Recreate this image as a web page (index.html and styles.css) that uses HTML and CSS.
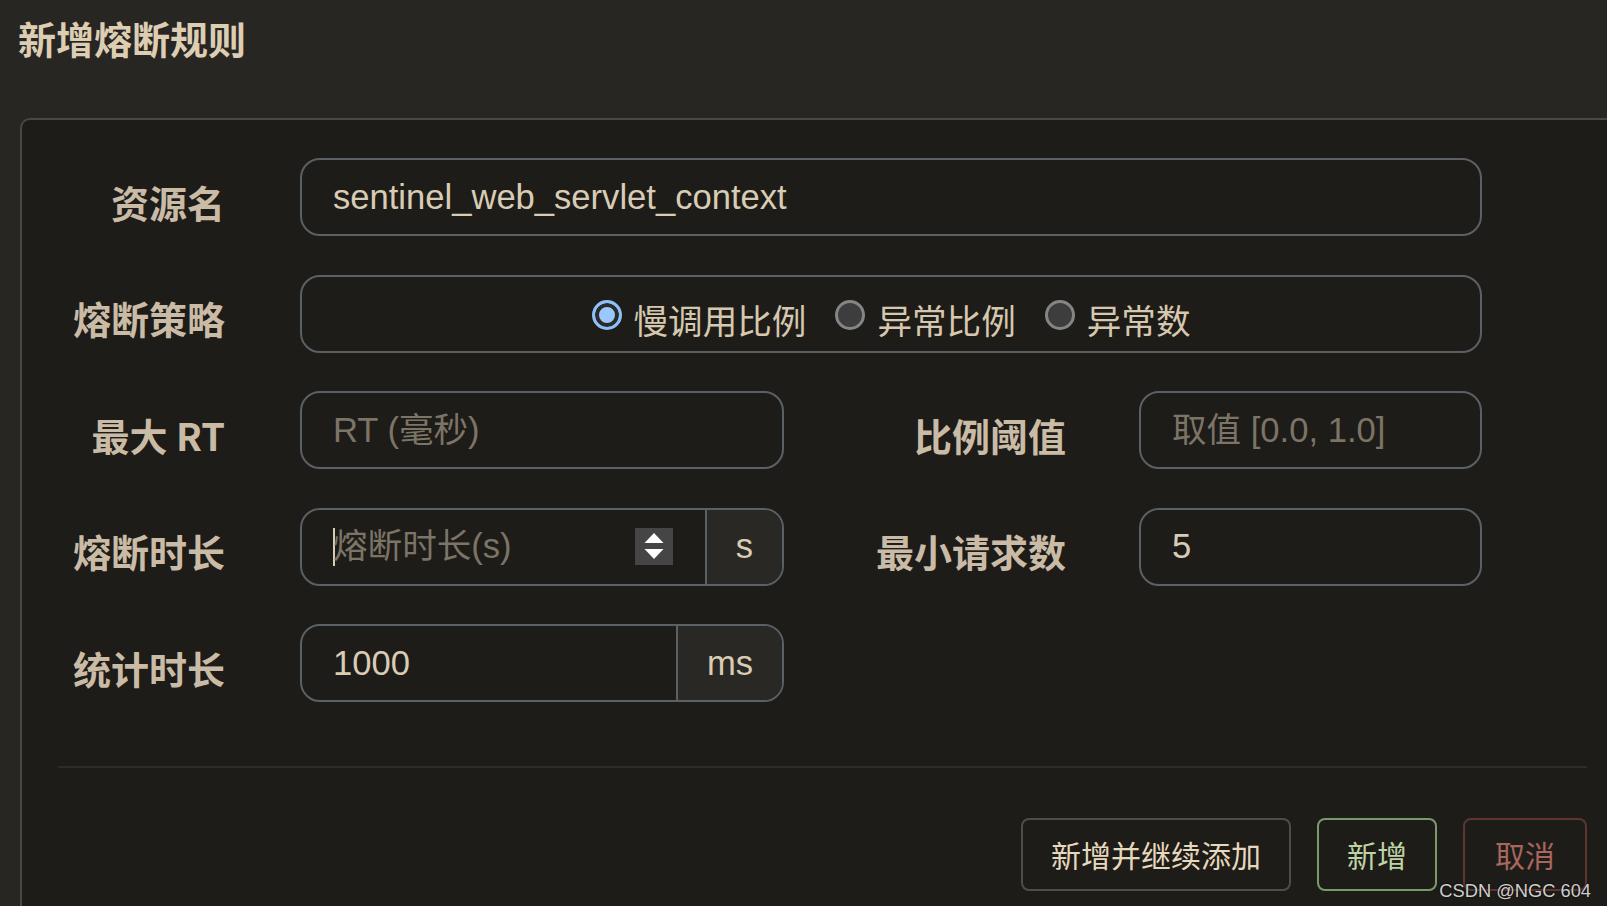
FILE: index.html
```html
<!DOCTYPE html>
<html lang="zh-CN">
<head>
    <meta charset="UTF-8">
    <meta name="viewport" content="width=device-width, initial-scale=1.0">
    <title>新增熔断规则</title>
    <link rel="stylesheet" href="styles.css">
</head>
<body>
    <div class="modal-header">
        <h1>新增熔断规则</h1>
    </div>

    <div class="modal-body">
        <form class="rule-form">
            <div class="row">
                <label class="label">资源名</label>
                <input class="field full" type="text" value="sentinel_web_servlet_context">
            </div>

            <div class="row">
                <label class="label">熔断策略</label>
                <div class="field full radio-group">
                    <span class="radio-item"><span class="radio checked"></span>慢调用比例</span>
                    <span class="radio-item"><span class="radio"></span>异常比例</span>
                    <span class="radio-item"><span class="radio"></span>异常数</span>
                </div>
            </div>

            <div class="row">
                <label class="label">最大 RT</label>
                <input class="field half" type="text" placeholder="RT (毫秒)">
                <label class="label side">比例阈值</label>
                <input class="field small" type="text" placeholder="取值 [0.0, 1.0]">
            </div>

            <div class="row">
                <label class="label">熔断时长</label>
                <div class="field half group">
                    <div class="group-input">
                        <span class="caret"></span>
                        <input type="text" placeholder="熔断时长(s)">
                        <span class="spinner">
                            <svg width="38" height="37" viewBox="0 0 38 37">
                                <path d="M19 5 L28.5 15 L9.5 15 Z" fill="#fff"/>
                                <path d="M9.5 21 L28.5 21 L19 31 Z" fill="#fff"/>
                            </svg>
                        </span>
                    </div>
                    <span class="addon">s</span>
                </div>
                <label class="label side">最小请求数</label>
                <input class="field small" type="text" value="5">
            </div>

            <div class="row">
                <label class="label">统计时长</label>
                <div class="field half group">
                    <div class="group-input">
                        <input type="text" value="1000">
                    </div>
                    <span class="addon">ms</span>
                </div>
            </div>
        </form>

        <div class="divider"></div>

        <div class="modal-footer">
            <button class="btn btn-default">新增并继续添加</button>
            <button class="btn btn-primary">新增</button>
            <button class="btn btn-cancel">取消</button>
        </div>
    </div>

    <span class="watermark">CSDN @NGC 604</span>
</body>
</html>
```

FILE: styles.css
```css
* {
    margin: 0;
    padding: 0;
    box-sizing: border-box;
}

body {
    font-family: 'Liberation Sans', 'Noto Sans CJK SC', sans-serif;
    background: #282622;
    height: 100vh;
    overflow: hidden;
    position: relative;
}

.modal-header {
    height: 118px;
    padding: 15px 0 0 18px;
}

.modal-header h1 {
    font-family: 'Noto Sans CJK SC', sans-serif;
    font-size: 38px;
    font-weight: 700;
    line-height: 46px;
    color: #dccdb3;
}

.modal-body {
    margin-left: 20px;
    height: calc(100vh - 118px);
    background: #1e1c19;
    border-top: 2px solid #4a4940;
    border-left: 2px solid #4a4940;
    border-top-left-radius: 10px;
    padding: 38px 20px 0 0;
}

.rule-form {
    padding-bottom: 25px;
}

.row {
    display: flex;
    align-items: center;
    height: 78px;
    margin-bottom: 38.5px;
}

.label {
    width: 203px;
    margin-right: 75px;
    padding-top: 8px;
    text-align: right;
    font-family: 'Noto Sans CJK SC', sans-serif;
    font-size: 38px;
    font-weight: 700;
    color: #c9bba5;
    white-space: nowrap;
}

.label.side {
    width: 282px;
    margin-right: 73px;
}

.field {
    height: 78px;
    border: 2px solid #5a6064;
    border-radius: 20px;
    background: #1e1c19;
    font-family: 'Liberation Sans', 'Noto Sans CJK SC', sans-serif;
    font-size: 34.6px;
    color: #d9ccb4;
    padding: 0 31px;
    outline: none;
}

.field.full {
    width: 1182px;
}

.field.half {
    width: 484px;
}

.field.small {
    width: 343px;
}

.field::placeholder,
.group-input input::placeholder {
    color: #7c7466;
}

.radio-group {
    display: flex;
    justify-content: center;
    align-items: center;
    gap: 29px;
    padding-top: 10px;
    font-family: 'Noto Sans CJK SC', sans-serif;
    color: #d6c8ae;
}

.radio-item {
    display: flex;
    align-items: center;
    gap: 12px;
}

.radio {
    width: 30px;
    height: 30px;
    border-radius: 50%;
    border: 3px solid #858585;
    background: #3d3d3d;
    margin-top: -8px;
}

.radio.checked {
    border-color: #8dc0f9;
    background: #9ac8fb;
    box-shadow: inset 0 0 0 4px #2b2b2b;
}

.group {
    display: flex;
    padding: 0;
    overflow: hidden;
}

.group-input {
    flex: 1;
    min-width: 0;
    display: flex;
    align-items: center;
    padding: 0 0 0 31px;
}

.group-input input {
    flex: 1;
    width: 0;
    min-width: 0;
    height: 100%;
    border: none;
    outline: none;
    background: transparent;
    font-family: 'Liberation Sans', 'Noto Sans CJK SC', sans-serif;
    font-size: 34.6px;
    color: #d9ccb4;
}

.caret {
    width: 2px;
    height: 38px;
    background: #d9ccb4;
    margin-right: -2px;
}

.spinner {
    display: flex;
    flex: none;
    width: 38px;
    height: 37px;
    background: #454545;
    margin-right: 32px;
}

.addon {
    display: flex;
    flex: none;
    align-items: center;
    padding: 0 29px;
    background: #2a2824;
    border-left: 2px solid #5a6064;
    font-size: 34.6px;
    color: #d9ccb4;
}

.divider {
    height: 2px;
    margin-left: 36px;
    background: #2e2c28;
}

.modal-footer {
    display: flex;
    justify-content: flex-end;
    gap: 26px;
    padding-top: 50px;
}

.btn {
    height: 73px;
    padding: 0 28px;
    border: 2px solid #4f4d45;
    border-radius: 8px;
    background: transparent;
    font-family: 'Noto Sans CJK SC', sans-serif;
    font-size: 30px;
    color: #e6d8bd;
    cursor: pointer;
}

.btn-primary {
    border-color: #7b9a6a;
    color: #bdd3a4;
}

.btn-cancel {
    padding: 0 30px;
    border-color: #5e3530;
    color: #a8665c;
}

.watermark {
    position: absolute;
    right: 16px;
    bottom: 4px;
    font-family: 'Liberation Sans', sans-serif;
    font-size: 18.3px;
    color: #cfcfcf;
    text-shadow: 0 0 2px #000;
}
```
